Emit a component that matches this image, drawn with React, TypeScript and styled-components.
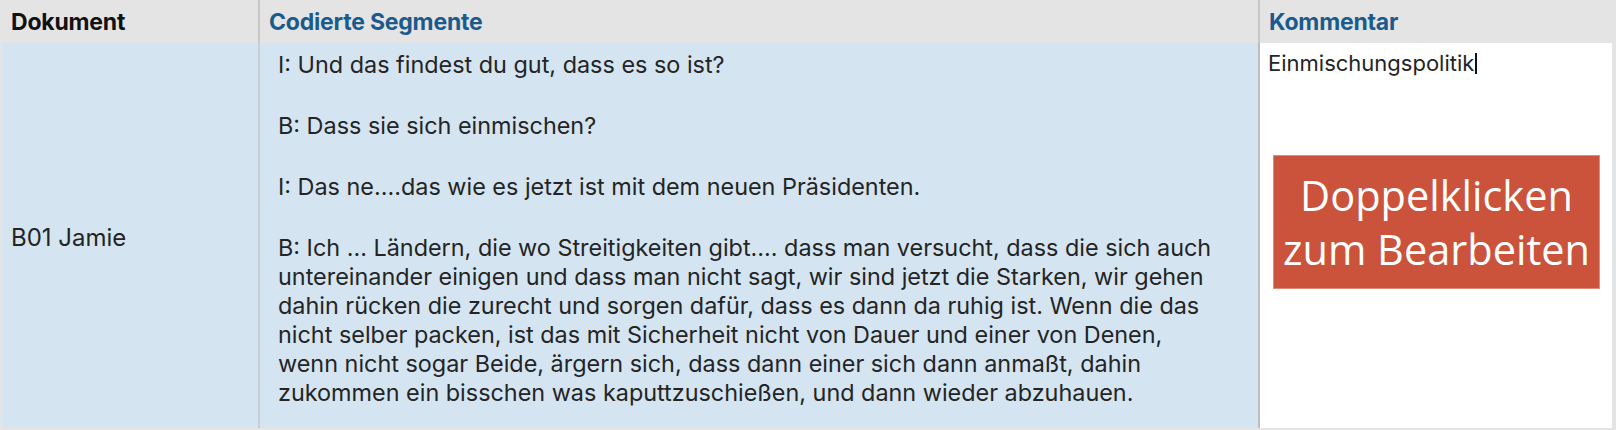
import React from "react";
import styled, { createGlobalStyle } from "styled-components";

const GlobalStyle = createGlobalStyle`
  html, body {
    margin: 0;
    padding: 0;
    background: #e4e4e4;
  }
`;

const segmentParagraphs: string[][] = [
  ["I: Und das findest du gut, dass es so ist?"],
  ["B: Dass sie sich einmischen?"],
  ["I: Das ne....das wie es jetzt ist mit dem neuen Präsidenten."],
  [
    "B: Ich … Ländern, die wo Streitigkeiten gibt.... dass man versucht, dass die sich auch",
    "untereinander einigen und dass man nicht sagt, wir sind jetzt die Starken, wir gehen",
    "dahin rücken die zurecht und sorgen dafür, dass es dann da ruhig ist. Wenn die das",
    "nicht selber packen, ist das mit Sicherheit nicht von Dauer und einer von Denen,",
    "wenn nicht sogar Beide, ärgern sich, dass dann einer sich dann anmaßt, dahin",
    "zukommen ein bisschen was kaputtzuschießen, und dann wieder abzuhauen.",
  ],
];

export default function App() {
  return (
    <>
      <GlobalStyle />
      <Table className="SegmentTable-root">
        <HeaderCell $accent={false}>Dokument</HeaderCell>
        <HeaderCell $accent $divided>
          Codierte Segmente
        </HeaderCell>
        <HeaderCell $accent $divided>
          Kommentar
        </HeaderCell>

        <DocCell>B01 Jamie</DocCell>
        <SegmentCell>
          {segmentParagraphs.map((lines, i) => (
            <Paragraph key={i}>
              {lines.map((line, j) => (
                <React.Fragment key={j}>
                  {line}
                  {j < lines.length - 1 && <br />}
                </React.Fragment>
              ))}
            </Paragraph>
          ))}
        </SegmentCell>
        <CommentCell>
          <CommentText>
            Einmischungspolitik
            <Caret />
          </CommentText>
          <EditHint>
            <span>Doppelklicken</span>
            <span>zum Bearbeiten</span>
          </EditHint>
        </CommentCell>
      </Table>
    </>
  );
}

const Table = styled.div`
  display: grid;
  grid-template-columns: 258px 1000px 352px;
  grid-template-rows: 43px 385px;
  padding: 0 2px 2px 2px;
  width: 1612px;
  font-family: Inter, "Noto Sans", sans-serif;
  color: #242424;
`;

const HeaderCell = styled.div<{ $accent: boolean; $divided?: boolean }>`
  display: flex;
  align-items: center;
  margin-left: ${(p) => (p.$divided ? "-2px" : "0")};
  padding: 1px 0 0 9px;
  border-left: ${(p) => (p.$divided ? "2px solid #c8c8c8" : "none")};
  font-size: 23px;
  font-weight: 700;
  letter-spacing: -0.2px;
  color: ${(p) => (p.$accent ? "#1b5a8c" : "#111")};
  background: #e4e4e4;
`;

const DocCell = styled.div`
  display: flex;
  align-items: center;
  padding: 4px 0 0 9px;
  background: #d4e4f1;
  border-right: 2px solid #c9cfd6;
  font-size: 24px;
`;

const SegmentCell = styled.div`
  padding: 6.5px 18px 0 18px;
  background: #d4e4f1;
  border-right: 2px solid #bdbdbd;
  font-size: 23.4px;
  line-height: 29px;
  white-space: nowrap;
`;

const Paragraph = styled.p`
  margin: 0 0 32px 0;
`;

const CommentCell = styled.div`
  display: flex;
  flex-direction: column;
  align-items: stretch;
  padding: 6px 12px 0 8px;
  background: #fff;
  font-size: 22px;
  line-height: 28px;
`;

const CommentText = styled.div`
  display: flex;
  align-items: center;
`;

const Caret = styled.span`
  display: inline-block;
  width: 2px;
  height: 21px;
  margin-left: 1px;
  background: #111;
`;

const EditHint = styled.div`
  display: flex;
  flex-direction: column;
  align-items: center;
  justify-content: center;
  margin: 78px 0 0 5px;
  height: 134px;
  background: #cb533c;
  border: 1px solid #e08a78;
  box-sizing: border-box;
  color: #fff;
  font-family: "Open Sans", sans-serif;
  font-size: 41.5px;
  line-height: 54px;
  white-space: nowrap;
`;
